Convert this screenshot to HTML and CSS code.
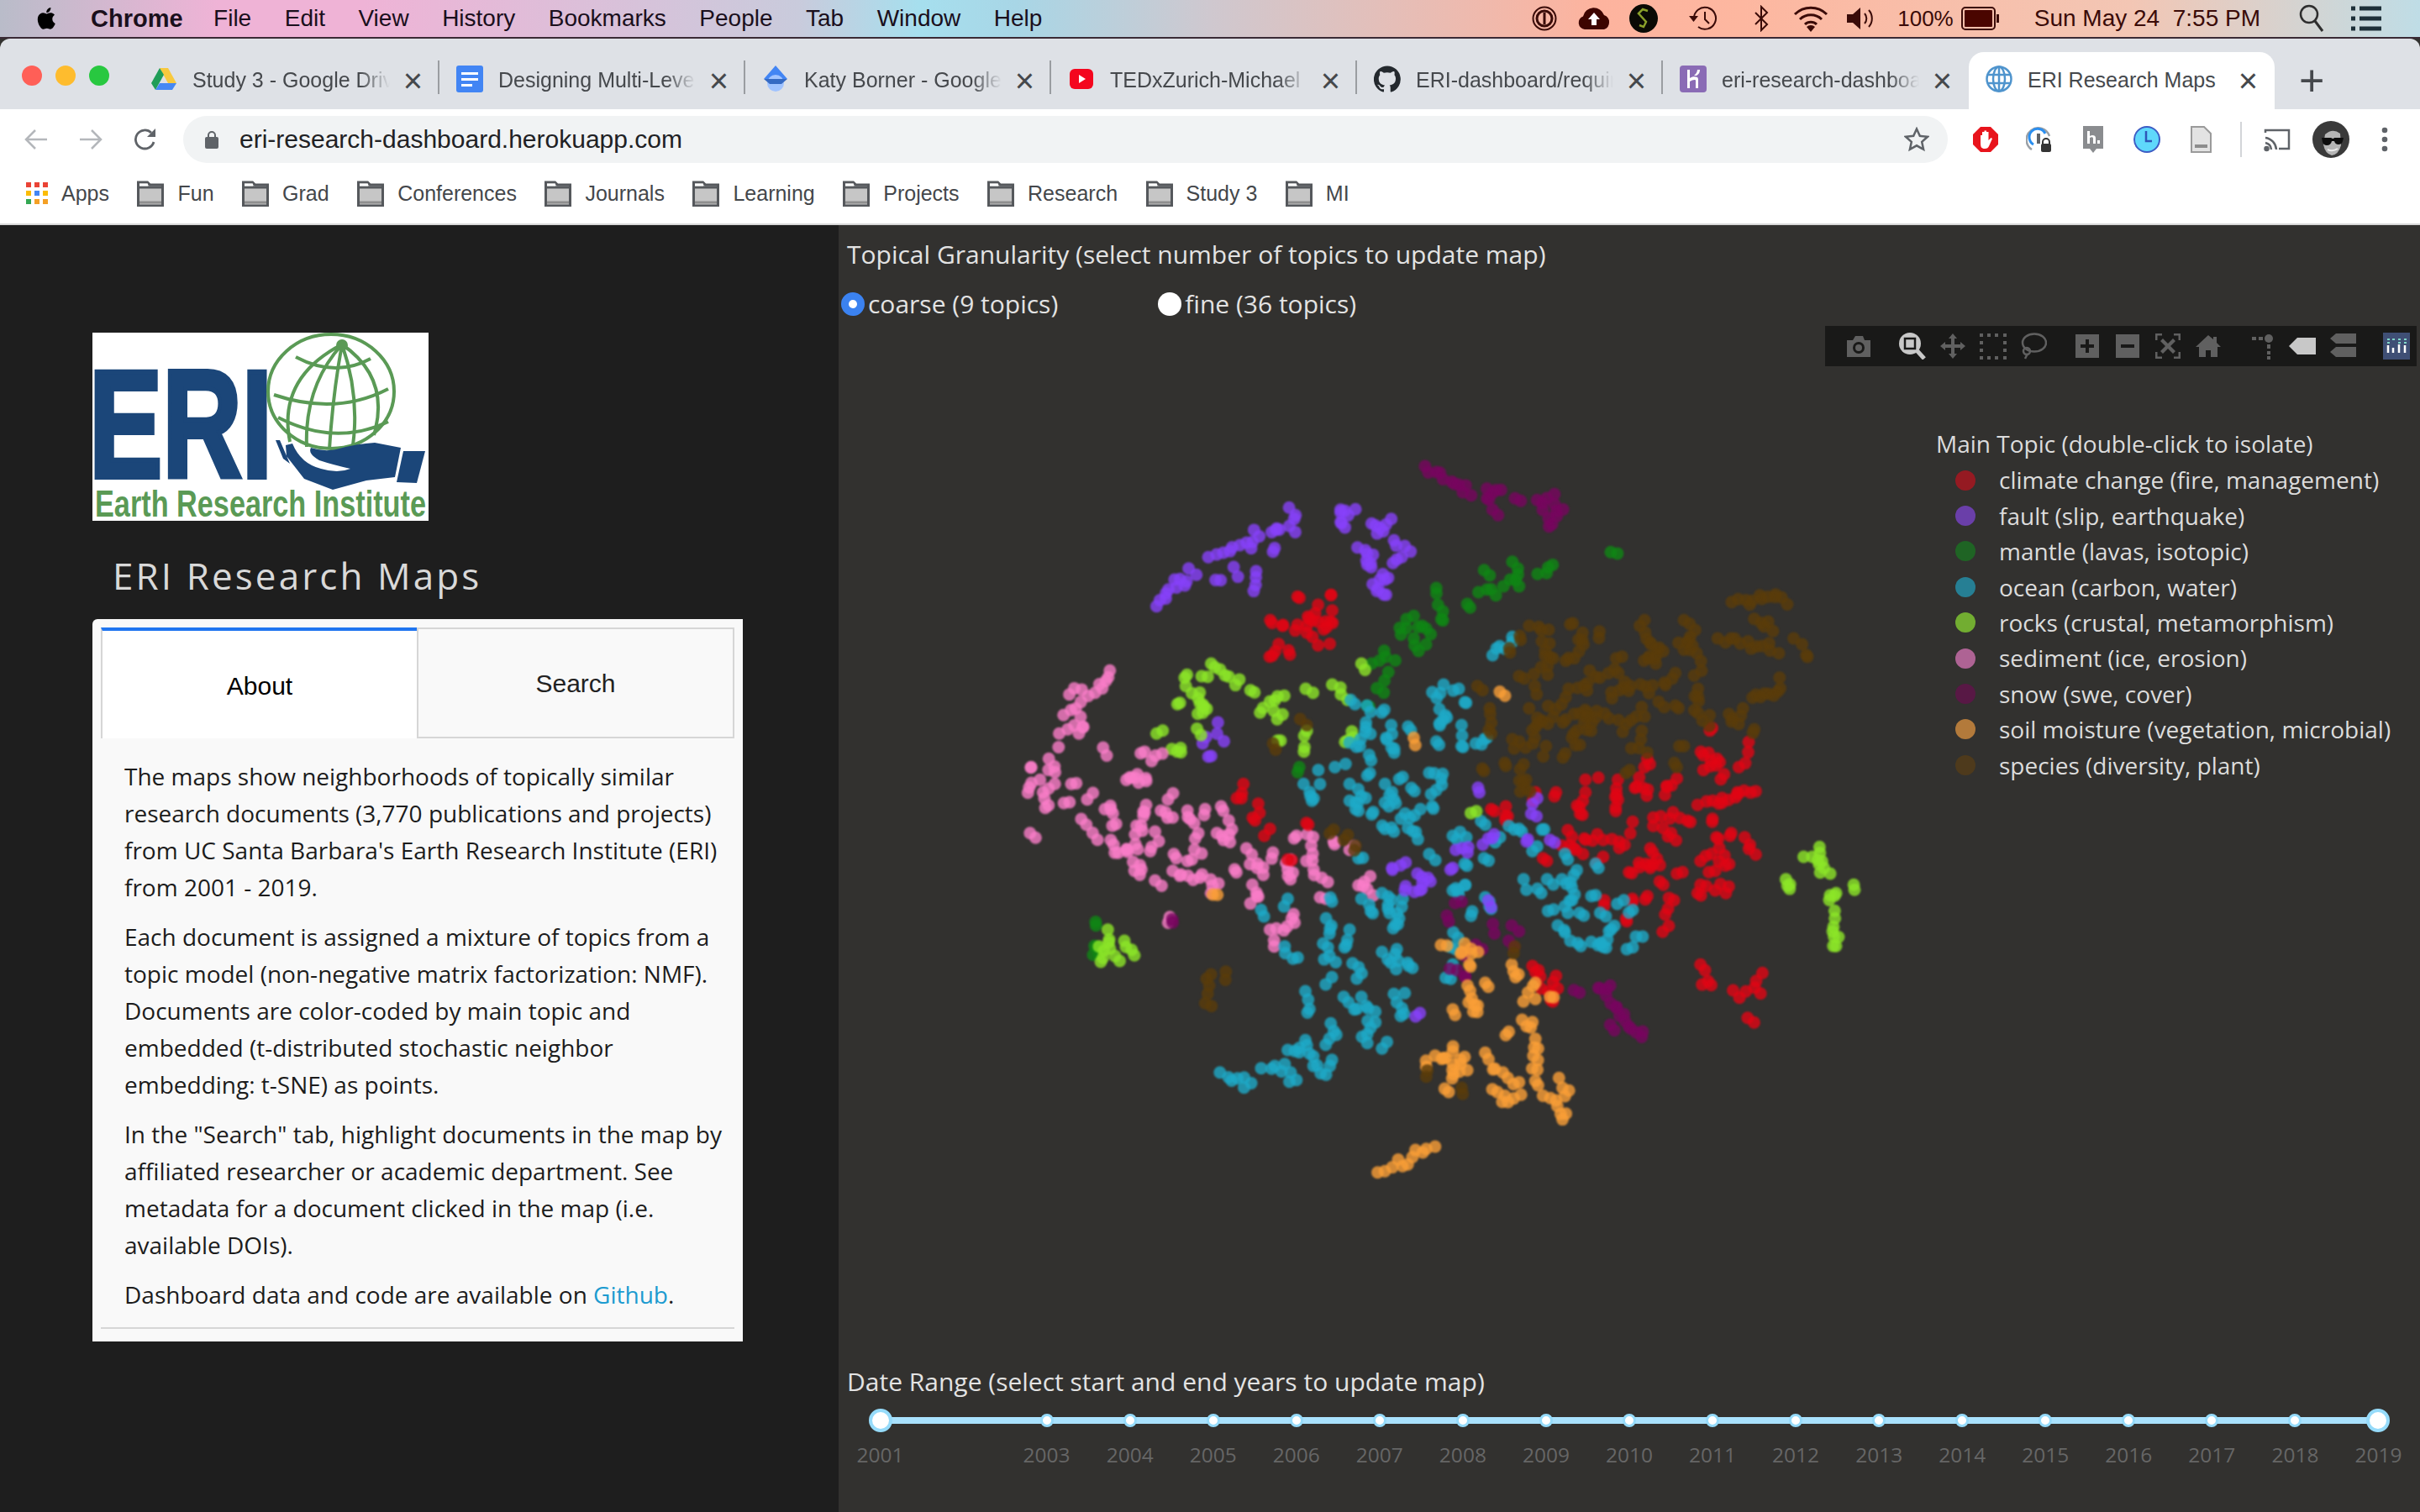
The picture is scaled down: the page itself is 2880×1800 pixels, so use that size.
FILE: index.html
```html
<!DOCTYPE html>
<html>
<head>
    <meta charset="UTF-8">
    <title>ERI Research Maps</title>
    <link rel="stylesheet" href="styles.css">
</head>
<body>
    <svg class="sprites" width="0" height="0">
        <symbol id="folder" viewBox="0 0 32 32">
            <path d="M1.5 3h11l3 3h15v25h-29z" fill="#c6c6c6" stroke="#55585c" stroke-width="3"/>
            <path d="M1.5 9h29" stroke="#55585c" stroke-width="3"/>
            <path d="M3 6h10" stroke="#fff" stroke-width="3"/>
            <path d="M3 27h26" stroke="#8e8e8e" stroke-width="3"/>
        </symbol>
    </svg>

    <!-- mac menu bar -->
    <div class="menubar">
        <svg class="apple" viewBox="0 0 24 24"><path d="M17.05 12.54c-.03-2.6 2.12-3.85 2.22-3.91-1.21-1.77-3.09-2.01-3.76-2.04-1.6-.16-3.12.94-3.93.94-.81 0-2.07-.92-3.4-.89-1.75.03-3.36 1.02-4.26 2.58-1.82 3.15-.46 7.82 1.3 10.38.87 1.25 1.9 2.65 3.25 2.6 1.31-.05 1.8-.84 3.38-.84 1.58 0 2.02.84 3.4.82 1.4-.03 2.29-1.27 3.15-2.53.99-1.45 1.4-2.85 1.42-2.93-.03-.01-2.73-1.05-2.77-4.18zM14.46 4.9c.72-.87 1.2-2.08 1.07-3.28-1.03.04-2.28.69-3.02 1.55-.66.77-1.24 2-1.09 3.18 1.15.09 2.33-.59 3.04-1.45z"/></svg>
        <nav class="menu">
            <b>Chrome</b><span>File</span><span>Edit</span><span>View</span><span>History</span><span>Bookmarks</span><span>People</span><span>Tab</span><span>Window</span><span>Help</span>
        </nav>
        <div class="status">
            <svg class="st st-1p" viewBox="0 0 30 30"><circle cx="15" cy="15" r="13.5" fill="none" stroke="#3a0b08" stroke-width="2"/><circle cx="15" cy="15" r="9" fill="none" stroke="#3a0b08" stroke-width="3"/><rect x="13.5" y="8" width="3" height="14" fill="#3a0b08"/></svg>
            <svg class="st st-cloud" viewBox="0 0 40 30"><path d="M9 28a8 8 0 0 1-2-15.500A13 13 0 0 1 32 11a9 9 0 0 1 0 17z" fill="#3d0500"/><path d="M20 8l7 8h-4v7h-6v-7h-4z" fill="#fff"/></svg>
            <svg class="st st-s" viewBox="0 0 34 34"><circle cx="17" cy="17" r="17" fill="#0a0a05"/><path d="M22 8l-6-2-5 5 9 10-3 6 -5-2" fill="none" stroke="#8aa02a" stroke-width="2.500"/></svg>
            <svg class="st st-time" viewBox="0 0 38 32"><path d="M8 16a13 13 0 1 1 5 10" fill="none" stroke="#3a0b08" stroke-width="2"/><path d="M2 13h11l-5.500 7z" fill="#3a0b08"/><path d="M21 8v9l5 5" fill="none" stroke="#3a0b08" stroke-width="2"/></svg>
            <svg class="st st-bt" viewBox="0 0 20 32"><path d="M3 9l14 14-7 7V2l7 7L3 23" fill="none" stroke="#3a0b08" stroke-width="2"/></svg>
            <svg class="st st-wifi" viewBox="0 0 42 32"><path d="M2 11a27 27 0 0 1 38 0M8 17a19 19 0 0 1 26 0M14 23a10 10 0 0 1 14 0" fill="none" stroke="#3a0b08" stroke-width="3"/><path d="M21 32l-5-6a7 7 0 0 1 10 0z" fill="#3a0b08"/></svg>
            <svg class="st st-vol" viewBox="0 0 34 28"><path d="M0 9h7l9-8v26l-9-8H0z" fill="#3a0b08"/><path d="M21 8a9 9 0 0 1 0 12M26 4a15 15 0 0 1 0 20" fill="none" stroke="#3a0b08" stroke-width="2"/></svg>
            <span class="st-pct">100%</span>
            <svg class="st st-batt" viewBox="0 0 46 28"><rect x="1" y="1" width="39" height="26" rx="4" fill="none" stroke="#3a0b08" stroke-width="2"/><rect x="4" y="4" width="33" height="20" rx="1" fill="#4a0500"/><rect x="42" y="9" width="3" height="10" fill="#3a0b08"/></svg>
            <span class="st-date">Sun May 24&nbsp; 7:55 PM</span>
            <svg class="st st-find" viewBox="0 0 30 34"><circle cx="12" cy="12" r="10" fill="none" stroke="#2e2e2e" stroke-width="2.500"/><path d="M19 20l9 12" stroke="#2e2e2e" stroke-width="3"/></svg>
            <svg class="st st-list" viewBox="0 0 36 30"><path d="M0 3h5M10 3h26M0 15h5M10 15h26M0 27h5M10 27h26" stroke="#1d2f38" stroke-width="5"/></svg>
        </div>
    </div>

    <!-- browser chrome -->
    <div class="tabstrip">
        <div class="lights"><i class="red"></i><i class="yellow"></i><i class="green"></i></div>
        <div class="tab">
            <svg class="fav" viewBox="0 0 32 32"><path d="M11 3h10l10 18H21z" fill="#f8c93e"/><path d="M11 3L1 21l5 8 10-18z" fill="#1f9d58"/><path d="M6 29l5-8h20l-5 8z" fill="#4688f4"/></svg>
            <span class="title">Study 3 - Google Drive</span><span class="x">×</span>
        </div>
        <div class="tab">
            <svg class="fav" viewBox="0 0 32 32"><rect width="32" height="32" rx="3" fill="#4285f4"/><path d="M6 8h20v3H6zM6 15h20v3H6zM6 22h13v3H6z" fill="#fff"/></svg>
            <span class="title">Designing Multi-Level</span><span class="x">×</span>
        </div>
        <div class="tab">
            <svg class="fav" viewBox="0 0 32 32"><path d="M16 0l14 16H2z" fill="#4285f4"/><circle cx="16" cy="21" r="10" fill="#a0c3ff"/><path d="M2 16h28l-7 6H9z" fill="#356ac3"/></svg>
            <span class="title">Katy Borner - Google Scholar</span><span class="x">×</span>
        </div>
        <div class="tab">
            <svg class="fav" viewBox="0 0 32 32"><rect x="2" y="4" width="28" height="24" rx="6" fill="#f4061e"/><path d="M13 11l8 5-8 5z" fill="#fff"/></svg>
            <span class="title">TEDxZurich-Michael Bo</span><span class="x">×</span>
        </div>
        <div class="tab">
            <svg class="fav" viewBox="0 0 24 24"><path fill="#24292e" d="M12 .3a12 12 0 0 0-3.800 23.400c.6.100.8-.3.800-.6v-2c-3.300.7-4-1.600-4-1.600-.6-1.400-1.400-1.800-1.400-1.800-1.100-.7.100-.7.100-.7 1.200.1 1.800 1.200 1.800 1.200 1.100 1.800 2.800 1.300 3.500 1 .1-.8.400-1.300.8-1.600-2.700-.3-5.500-1.300-5.500-5.900 0-1.300.5-2.400 1.200-3.200-.1-.3-.5-1.500.1-3.200 0 0 1-.3 3.300 1.200a11.500 11.500 0 0 1 6 0c2.300-1.500 3.300-1.200 3.300-1.200.6 1.700.2 2.900.1 3.200.8.800 1.200 1.900 1.200 3.200 0 4.600-2.800 5.600-5.500 5.900.4.400.8 1.100.8 2.200v3.300c0 .3.2.7.8.6A12 12 0 0 0 12 .3"/></svg>
            <span class="title">ERI-dashboard/requirem</span><span class="x">×</span>
        </div>
        <div class="tab">
            <svg class="fav" viewBox="0 0 32 32"><rect width="32" height="32" rx="4" fill="#8a6bb5"/><path d="M9 5h3v10c3-2 6-2 9-1 1 1 1 2 1 4v9h-3v-9c0-2-4-1-7 1v8H9zM21 5h3c0 3-1 5-4 7h-3c2-2 4-4 4-7z" fill="#fff"/></svg>
            <span class="title">eri-research-dashboard</span><span class="x">×</span>
        </div>
        <div class="tab active">
            <svg class="fav" viewBox="0 0 32 32" fill="none" stroke="#4f94cd" stroke-width="2.500"><circle cx="16" cy="16" r="14.500"/><ellipse cx="16" cy="16" rx="7" ry="14.500"/><path d="M2 11h28M2 21h28M16 2v28"/></svg>
            <span class="title">ERI Research Maps</span><span class="x">×</span>
        </div>
        <span class="newtab">+</span>
    </div>

    <div class="toolbar">
        <svg class="tb-icon" viewBox="0 0 28 28" fill="none" stroke="#b4b7bb" stroke-width="2.500"><path d="M27 14H3M13 3L2 14l11 11"/></svg>
        <svg class="tb-icon" viewBox="0 0 28 28" fill="none" stroke="#b4b7bb" stroke-width="2.500"><path d="M1 14h24M15 3l11 11-11 11"/></svg>
        <svg class="tb-icon" viewBox="0 0 28 28"><path d="M24 17A11 11 0 1 1 21 6" fill="none" stroke="#5f6368" stroke-width="2.800"/><path d="M16 11h10V1z" fill="#5f6368"/></svg>
        <div class="omnibox">
            <svg class="lock" viewBox="0 0 16 22"><path d="M4 9V6a4 4 0 0 1 8 0v3" fill="none" stroke="#5f6368" stroke-width="2"/><rect y="8" width="16" height="14" rx="2" fill="#5f6368"/></svg>
            <span class="url">eri-research-dashboard.herokuapp.com</span>
            <svg class="star" viewBox="0 0 30 30"><path d="M15 2.500l3.800 8.300 9.200 1-6.800 6.100 1.900 9-8.100-4.600-8.100 4.600 1.900-9L2 11.800l9.200-1z" fill="none" stroke="#5f6368" stroke-width="2.500"/></svg>
        </div>
        <div class="extensions">
            <svg class="ext" viewBox="0 0 32 32"><path d="M10 1h12l9 9v12l-9 9H10l-9-9V10z" fill="#e8141c"/><path d="M10 20v-9h2v6-10h2.500v8-9.500H17V15V7h2.500v10l3-3 1.500 1-4 9c-1 2-2 3-5 3-4 0-5-2-5-7z" fill="#fff"/></svg>
            <svg class="ext" viewBox="0 0 32 32"><path d="M7 28A14 14 0 1 1 28 12" fill="none" stroke="#9aa0a6" stroke-width="2.500"/><path d="M9 22a10 10 0 1 1 14-13" fill="none" stroke="#2b8ff0" stroke-width="3"/><rect x="13" y="9" width="4" height="12" fill="#5f6368"/><path d="M20 22v-3a4 4 0 0 1 8 0v3" fill="none" stroke="#333" stroke-width="2"/><rect x="18" y="21" width="12" height="10" rx="2" fill="#333"/></svg>
            <svg class="ext" viewBox="0 0 32 32"><path d="M4 0h24v27h-8l-4 5-4-5H4z" fill="#8a8c8f"/><path d="M9 6h3v6c3-2 7-1 7 2v7h-3v-6c0-2-2-2-4-1v7H9zM21 17h3v4h-3z" fill="#fff"/></svg>
            <svg class="ext" viewBox="0 0 32 32"><circle cx="16" cy="16" r="15" fill="#5fd8fb" stroke="#3c5cc4" stroke-width="2"/><path d="M15 6v12h7" fill="none" stroke="#2e56b8" stroke-width="2.500"/></svg>
            <svg class="ext" viewBox="0 0 32 32"><path d="M5 1h15l8 8v22H5z" fill="#e3e3e3" stroke="#9a9a9a" stroke-width="2"/><path d="M9 22h15v4H9z" fill="#8d8d8d"/></svg>
            <i class="divider"></i>
            <svg class="ext" viewBox="0 0 32 32" fill="none" stroke="#5f6368" stroke-width="2.500"><path d="M2 8V5h28v22H18"/><path d="M2 14a15 15 0 0 1 13 14M2 20a9 9 0 0 1 7 8"/><circle cx="3.500" cy="27" r="2" fill="#5f6368"/></svg>
            <svg class="avatar" viewBox="0 0 44 44"><circle cx="22" cy="22" r="22" fill="#3a3a3a"/><path d="M15 16q9-8 18-1l1 14q-3 11-11 12-8-2-10-13z" fill="#b5b5b5"/><path d="M11 20h11l2 1h1l1-1h11l-1 4q-1 4-5 4t-5-4h-3q-1 5-6 5-4 0-5-4z" fill="#0d0d0d"/><path d="M18 34q6 3 12-1" stroke="#eee" stroke-width="2" fill="none"/></svg>
            <svg class="ext" viewBox="0 0 32 32" fill="#5f6368"><circle cx="16" cy="5" r="3.300"/><circle cx="16" cy="16" r="3.300"/><circle cx="16" cy="27" r="3.300"/></svg>
        </div>
    </div>

    <div class="bookmarks">
        <span class="bm">
            <svg class="apps" viewBox="0 0 26 26"><path d="M0 0h6v6H0z" fill="#ea4335"/><path d="M10 0h6v6h-6zM20 0h6v6h-6z" fill="#ea4335"/><path d="M0 10h6v6H0zM10 10h6v6h-6z" fill="#fbbc05"/><path d="M10 10h6v6h-6z" fill="#4285f4"/><path d="M20 10h6v6h-6z" fill="#fbbc05"/><path d="M0 20h6v6H0z" fill="#34a853"/><path d="M10 20h6v6h-6zM20 20h6v6h-6z" fill="#f4a025"/></svg>Apps
        </span>
        <span class="bm"><svg class="folder"><use href="#folder"/></svg>Fun</span>
        <span class="bm"><svg class="folder"><use href="#folder"/></svg>Grad</span>
        <span class="bm"><svg class="folder"><use href="#folder"/></svg>Conferences</span>
        <span class="bm"><svg class="folder"><use href="#folder"/></svg>Journals</span>
        <span class="bm"><svg class="folder"><use href="#folder"/></svg>Learning</span>
        <span class="bm"><svg class="folder"><use href="#folder"/></svg>Projects</span>
        <span class="bm"><svg class="folder"><use href="#folder"/></svg>Research</span>
        <span class="bm"><svg class="folder"><use href="#folder"/></svg>Study 3</span>
        <span class="bm"><svg class="folder"><use href="#folder"/></svg>MI</span>
    </div>

    <!-- dashboard -->
    <div class="page">
        <aside class="sidebar">
            <svg class="logo" viewBox="110 396 400 224">
                <rect x="110" y="396" width="400" height="224" fill="#fff"/>
                <text class="logo-eri" x="106" y="568" textLength="218" lengthAdjust="spacingAndGlyphs">ERI</text>
                <g fill="none" stroke="#5a9a55" stroke-width="4">
                    <ellipse cx="394" cy="466" rx="75" ry="68"/>
                    <path d="M407 410Q330 450 345 526M407 410Q362 460 365 532M407 410Q396 470 392 535M407 410Q428 470 420 530M407 410Q465 450 445 518"/>
                    <path d="M352 425Q399 450 441 427M326 470Q400 495 462 463M331 497Q399 532 462 502"/>
                </g>
                <circle cx="407" cy="411" r="7" fill="#5a9a55"/>
                <path d="M328 524L333 524L345 552L337 546ZM340 530L348 528Q358 552 382 558Q402 564 417 558Q395 553 380 548Q366 540 370 533Q385 538 400 535Q425 528 446 527L477 533L470 568L436 572L396 583L362 570L341 543Z" fill="#1b4679"/>
                <path d="M480 537h26l-10 38-24-1z" fill="#1b4679"/>
                <text class="logo-name" x="113" y="615" textLength="394" lengthAdjust="spacingAndGlyphs">Earth Research Institute</text>
            </svg>
            <h1 class="app-title">ERI Research Maps</h1>
            <div class="card">
                <div class="tabs">
                    <div class="tab-btn selected">About</div>
                    <div class="tab-btn">Search</div>
                </div>
                <div class="about">
                    <p>The maps show neighborhoods of topically similar research documents (3,770 publications and projects) from UC Santa Barbara's Earth Research Institute (ERI) from 2001 - 2019.</p>
                    <p>Each document is assigned a mixture of topics from a topic model (non-negative matrix factorization: NMF). Documents are color-coded by main topic and embedded (t-distributed stochastic neighbor embedding: t-SNE) as points.</p>
                    <p>In the "Search" tab, highlight documents in the map by affiliated researcher or academic department. See metadata for a document clicked in the map (i.e. available DOIs).</p>
                    <p>Dashboard data and code are available on <a href="#">Github</a>.</p>
                </div>
                <hr class="rule">
            </div>
        </aside>

        <main class="main">
            <div class="control-label">Topical Granularity (select number of topics to update map)</div>
            <div class="radios">
                <label class="radio on"><i></i>coarse (9 topics)</label>
                <label class="radio"><i></i>fine (36 topics)</label>
            </div>

            <div class="plot">
                <svg id="scatter" class="scatter" viewBox="998 268 1882 1532"></svg>

                <div class="modebar">
                    <div class="mb-group">
                        <svg class="mb" viewBox="0 0 32 32"><path d="M2 9h7l3-5h9l2 5h7v20H2z"/><circle cx="16" cy="18" r="7" fill="#191918"/><circle cx="16" cy="18" r="4"/></svg>
                    </div>
                    <div class="mb-group">
                        <svg class="mb on" viewBox="0 0 32 32"><circle cx="13" cy="13" r="13"/><rect x="7" y="7" width="12" height="12" fill="none" stroke="#191918" stroke-width="2.500"/><path d="M21 21l9 10" stroke="#c8c8c8" stroke-width="5"/></svg>
                        <svg class="mb" viewBox="0 0 32 32"><path d="M16 1l5 6h-3v7h7v-3l6 5-6 5v-3h-7v7h3l-5 6-5-6h3v-7H7v3l-6-5 6-5v3h7V7h-3z"/></svg>
                        <svg class="mb" viewBox="0 0 32 32"><path d="M0 1h4v4H0zM9 1h4v4H9zM18 1h4v4h-4zM28 1h4v4h-4zM0 10h4v4H0zM28 10h4v4h-4zM0 19h4v4H0zM28 19h4v4h-4zM0 28h4v4H0zM9 28h4v4H9zM18 28h4v4h-4zM28 28h4v4h-4z"/></svg>
                        <svg class="mb mb-lasso" viewBox="0 0 32 32"><ellipse cx="17" cy="12" rx="14" ry="10.500"/><circle cx="8" cy="22" r="4"/><path d="M9 25l-3 6"/></svg>
                    </div>
                    <div class="mb-group">
                        <svg class="mb" viewBox="0 0 32 32"><path d="M2 2h28v28H2z"/><path d="M14 8h4v6h6v4h-6v6h-4v-6H8v-4h6z" fill="#191918"/></svg>
                        <svg class="mb" viewBox="0 0 32 32"><path d="M2 2h28v28H2z"/><path d="M8 14h16v4H8z" fill="#191918"/></svg>
                        <svg class="mb" viewBox="0 0 32 32" ><path d="M1 1h8v2.500H3.500V9H1zM23 1h8v8h-2.500V3.500H23zM1 23h2.500v5.500H9V31H1zM28.500 23H31v8h-8v-2.500h5.500z"/><path d="M10 7l6 6 6-6 3 3-6 6 6 6-3 3-6-6-6 6-3-3 6-6-6-6z"/></svg>
                        <svg class="mb" viewBox="0 0 32 32"><path d="M16 3L1 17h4v12h8v-8h6v8h8V17h4l-5-5V5h-4v3z"/></svg>
                    </div>
                    <div class="mb-group">
                        <svg class="mb" viewBox="0 0 32 32"><path d="M4 5h5v4H4zM12 5h5v4h-5z"/><circle cx="24" cy="7" r="5"/><path d="M22 14h4v5h-4zM22 22h4v4h-4zM22 28h4v4h-4z"/></svg>
                        <svg class="mb on" viewBox="0 0 32 32"><path d="M10 6h22v20H10L0 16z"/></svg>
                        <svg class="mb" viewBox="0 0 32 32"><path d="M8 1h24v12H8l-7-6zM8 17h24v12H8l-7-6z"/></svg>
                    </div>
                    <div class="mb-group">
                        <svg class="mb-logo" viewBox="0 0 32 32"><rect width="32" height="32" fill="#3f4f75"/><path d="M6 24v-9M12 24v-6M19 24V14M26 24v-9" stroke="#fff" stroke-width="2.500"/><path d="M5 7h3v2H5zM11 7h3v2h-3zM18 7h3v2h-3zM25 7h3v2h-3zM5 11h3v2H5zM18 11h3v2h-3zM25 11h3v2h-3z" fill="#7fd6c8"/></svg>
                    </div>
                </div>

                <div class="legend">
                    <div class="legend-title">Main Topic (double-click to isolate)</div>
                    <div class="legend-item"><i class="c-red"></i>climate change (fire, management)</div>
                    <div class="legend-item"><i class="c-purple"></i>fault (slip, earthquake)</div>
                    <div class="legend-item"><i class="c-green"></i>mantle (lavas, isotopic)</div>
                    <div class="legend-item"><i class="c-teal"></i>ocean (carbon, water)</div>
                    <div class="legend-item"><i class="c-lime"></i>rocks (crustal, metamorphism)</div>
                    <div class="legend-item"><i class="c-pink"></i>sediment (ice, erosion)</div>
                    <div class="legend-item"><i class="c-snow"></i>snow (swe, cover)</div>
                    <div class="legend-item"><i class="c-orange"></i>soil moisture (vegetation, microbial)</div>
                    <div class="legend-item"><i class="c-brown"></i>species (diversity, plant)</div>
                </div>
            </div>

            <div class="control-label">Date Range (select start and end years to update map)</div>
            <div class="slider">
                <div class="mark end"><i></i>2001</div>
                <div class="mark blank"></div>
                <div class="mark"><i></i>2003</div>
                <div class="mark"><i></i>2004</div>
                <div class="mark"><i></i>2005</div>
                <div class="mark"><i></i>2006</div>
                <div class="mark"><i></i>2007</div>
                <div class="mark"><i></i>2008</div>
                <div class="mark"><i></i>2009</div>
                <div class="mark"><i></i>2010</div>
                <div class="mark"><i></i>2011</div>
                <div class="mark"><i></i>2012</div>
                <div class="mark"><i></i>2013</div>
                <div class="mark"><i></i>2014</div>
                <div class="mark"><i></i>2015</div>
                <div class="mark"><i></i>2016</div>
                <div class="mark"><i></i>2017</div>
                <div class="mark"><i></i>2018</div>
                <div class="mark end"><i></i>2019</div>
            </div>
        </main>
    </div>

    <script src="map.js"></script>
</body>
</html>
```

FILE: styles.css
```css
* {
    box-sizing: border-box;
}

html, body {
    margin: 0;
    width: 2880px;
    height: 1800px;
    overflow: hidden;
}

body {
    display: flex;
    flex-direction: column;
    font-family: 'Open Sans', 'Liberation Sans', sans-serif;
    background: #32312f;
}

.sprites {
    position: absolute;
}

/* mac menu bar */
.menubar {
    height: 46px;
    flex: none;
    display: flex;
    align-items: center;
    padding: 0 0 0 41px;
    font-family: 'Liberation Sans', sans-serif;
    font-size: 28px;
    color: #1a0f1c;
    border-bottom: 2px solid #3a2a35;
    background: linear-gradient(90deg, #b9bcc9 0%, #efb3d6 9%, #efb3d6 15%, #c9cbdc 33%, #a6dfee 38%, #a8d6e6 42%, #cfc8cf 50%, #fdb39e 66%, #fdb7a0 72%, #f3c6b4 88%, #bfdde6 100%);
}

.apple {
    width: 30px;
    height: 34px;
    flex: none;
}

.menu {
    display: flex;
    gap: 39.500px;
    margin-left: 37px;
}

.menu b {
    font-size: 29px;
    margin-right: -3px;
}

.status {
    display: flex;
    align-items: center;
    position: absolute;
    right: 46px;
    top: 0;
    height: 44px;
    color: #3a0b08;
}

.st { flex: none; }
.st-1p { width: 30px; height: 30px; }
.st-cloud { width: 40px; height: 30px; margin-left: 24px; }
.st-s { width: 34px; height: 34px; margin-left: 22px; }
.st-time { width: 38px; height: 32px; margin-left: 35px; }
.st-bt { width: 20px; height: 32px; margin-left: 40px; }
.st-wifi { width: 42px; height: 32px; margin-left: 28px; }
.st-vol { width: 34px; height: 28px; margin-left: 22px; }
.st-pct { margin-left: 26px; font-size: 26px; }
.st-batt { width: 46px; height: 28px; margin-left: 9px; }
.st-date { margin-left: 41px; }
.st-find { width: 30px; height: 34px; margin-left: 46px; }
.st-list { width: 36px; height: 30px; margin-left: 32px; }

/* tabs */
.tabstrip {
    height: 84px;
    flex: none;
    display: flex;
    align-items: flex-end;
    padding-left: 159px;
    position: relative;
    background: #dee1e6;
    border-radius: 12px 12px 0 0;
    font-family: 'Liberation Sans', sans-serif;
    font-size: 25px;
    color: #45484c;
}

.lights {
    position: absolute;
    left: 26px;
    top: 32px;
    display: flex;
    gap: 16px;
}

.lights i {
    width: 24px;
    height: 24px;
    border-radius: 50%;
}

.lights .red { background: #ff5f57; }
.lights .yellow { background: #febc2e; }
.lights .green { background: #28c840; }

.tab {
    width: 364px;
    height: 68px;
    flex: none;
    display: flex;
    align-items: center;
    padding: 0 20px 0 20px;
    position: relative;
}

.tab::after {
    content: "";
    position: absolute;
    right: 0;
    top: 10px;
    height: 40px;
    width: 2px;
    background: #9a9da1;
}

.tab:nth-child(7)::after,
.tab.active::after {
    display: none;
}

.tab.active {
    background: #fff;
    border-radius: 18px 18px 0 0;
}

.fav {
    width: 32px;
    height: 32px;
    flex: none;
    margin-top: -4px;
}

.title {
    width: 242px;
    margin: -1px 0 0 18px;
    white-space: nowrap;
    overflow: hidden;
    -webkit-mask-image: linear-gradient(90deg, #000 85%, transparent 100%);
    mask-image: linear-gradient(90deg, #000 85%, transparent 100%);
}

.tab.active .title {
    -webkit-mask-image: none;
    mask-image: none;
}

.x {
    margin: -1px 0 0 16px;
    font-size: 40px;
    line-height: 1;
    color: #45484c;
}

.newtab {
    margin: 0 0 8px 29px;
    font-size: 52px;
    line-height: 1;
    color: #45484c;
}

/* toolbar */
.toolbar {
    height: 72px;
    flex: none;
    display: flex;
    align-items: center;
    padding: 0 0 0 29px;
    background: #fff;
    font-family: 'Liberation Sans', sans-serif;
}

.tb-icon {
    width: 28px;
    height: 28px;
    flex: none;
    margin-right: 37px;
}

.omnibox {
    width: 2100px;
    height: 56px;
    margin-left: -6px;
    flex: none;
    display: flex;
    align-items: center;
    padding: 0 22px 0 26px;
    background: #f1f3f4;
    border-radius: 28px;
}

.lock {
    width: 16px;
    height: 22px;
    flex: none;
}

.url {
    margin-left: 25px;
    font-size: 30px;
    color: #202124;
}

.star {
    width: 30px;
    height: 30px;
    margin-left: auto;
}

.extensions {
    flex: 1;
    display: flex;
    align-items: center;
    gap: 32px;
    padding-left: 29px;
}

.ext {
    width: 32px;
    height: 32px;
    flex: none;
}

.divider {
    width: 2px;
    height: 42px;
    margin: 0 -6px 0 -1px;
    background: #d3d5d8;
}

.avatar {
    width: 44px;
    height: 44px;
    flex: none;
    margin: 0 -6px;
}

/* bookmarks bar */
.bookmarks {
    height: 66px;
    flex: none;
    display: flex;
    align-items: center;
    gap: 33.500px;
    padding: 0 0 8px 31px;
    background: #fff;
    border-bottom: 2px solid #d8d8d8;
    font-family: 'Liberation Sans', sans-serif;
    font-size: 25px;
    color: #44474b;
}

.bm {
    display: flex;
    align-items: center;
    gap: 16px;
}

.apps {
    width: 26px;
    height: 26px;
}

.folder {
    width: 32px;
    height: 32px;
}

/* dashboard */
.page {
    flex: 1;
    min-height: 0;
    display: flex;
}

.sidebar {
    width: 998px;
    flex: none;
    padding: 128px 0 0 110px;
    background: #1e1e1e;
}

.logo {
    display: block;
    width: 400px;
    height: 224px;
}

.logo-eri {
    font-family: 'Liberation Sans', sans-serif;
    font-weight: bold;
    font-size: 182px;
    fill: #1b4679;
    stroke: #1b4679;
    stroke-width: 6px;
}

.logo-name {
    font-family: 'Liberation Sans', sans-serif;
    font-weight: bold;
    font-size: 44px;
    fill: #5a9a55;
}

.app-title {
    margin: 35px 0 0 24px;
    font-size: 44px;
    line-height: 60px;
    font-weight: 400;
    letter-spacing: 3.100px;
    color: #d9d9d9;
}

.card {
    width: 774px;
    height: 860px;
    margin-top: 22px;
    padding: 10px 10px 0;
    background: #f9f9f9;
    border-radius: 6px 0 0 0;
}

.tabs {
    display: flex;
    height: 132px;
    font-family: 'Liberation Sans', sans-serif;
    font-size: 30px;
    color: #222;
}

.tab-btn {
    flex: 1;
    display: flex;
    align-items: center;
    justify-content: center;
    border: 2px solid #d6d6d6;
    padding-top: 2px;
}

.tab-btn.selected {
    background: #fff;
    color: #000;
    border: 0;
    border-left: 2px solid #d6d6d6;
    border-top: 4px solid #1f75f0;
    padding: 4px 0 0;
}

.about {
    padding: 23px 8px 0 28px;
    font-size: 28px;
    line-height: 44px;
    color: #1c1c1c;
}

.about p {
    margin: 0 0 15px;
}

.about a {
    color: #1c9bd0;
    text-decoration: none;
}

.rule {
    margin: 17px 0 0;
    border: 0;
    border-top: 2px solid #d6d6d6;
}

.main {
    flex: 1;
    min-width: 0;
    display: flex;
    flex-direction: column;
    color: #e3e3e3;
    font-size: 30px;
}

.control-label {
    flex: none;
    padding-left: 10px;
    line-height: 44px;
}

.main > .control-label:first-child {
    margin-top: 13px;
}

.radios {
    display: flex;
    gap: 119px;
    margin-top: 15px;
    padding-left: 3px;
    line-height: 44px;
}

.radio {
    display: flex;
    align-items: center;
    gap: 4px;
}

.radio i {
    width: 28px;
    height: 28px;
    border-radius: 50%;
    background: #fff;
}

.radio.on i {
    background: #3b82f0;
    border: 9px solid #3b82f0;
    position: relative;
}

.radio.on i::after {
    content: "";
    display: block;
    width: 10px;
    height: 10px;
    border-radius: 50%;
    background: #fff;
}

.plot {
    flex: 1;
    min-height: 0;
}

.scatter {
    position: absolute;
    left: 998px;
    top: 268px;
    width: 1882px;
    height: 1532px;
    filter: blur(0.8px);
}

.modebar {
    position: absolute;
    left: 2172px;
    top: 388px;
    width: 704px;
    height: 48px;
    padding-left: 16px;
    display: flex;
    gap: 16px;
    background: #191918;
}

.mb-group {
    display: flex;
}

.mb, .mb-logo {
    width: 48px;
    height: 48px;
    padding: 8px;
    fill: #606060;
}

.mb.on {
    fill: #c8c8c8;
}

.mb-lasso {
    fill: none;
    stroke: #606060;
    stroke-width: 2.500px;
}

.legend {
    position: absolute;
    left: 2304px;
    top: 507px;
    font-size: 28px;
    line-height: 42.400px;
    color: #dcdcdc;
}

.legend-title {
    margin-bottom: 1px;
}

.legend-item {
    display: flex;
    align-items: center;
    padding-left: 23px;
    white-space: nowrap;
}

.legend-item i {
    width: 24px;
    height: 24px;
    margin-right: 28px;
    border-radius: 50%;
}

.c-red { background: #951a22; }
.c-purple { background: #6a3fa9; }
.c-green { background: #1f6424; }
.c-teal { background: #267f94; }
.c-lime { background: #72ad31; }
.c-pink { background: #ae6394; }
.c-snow { background: #581845; }
.c-orange { background: #b37a3b; }
.c-brown { background: #4e3a1c; }

.slider {
    display: grid;
    grid-template-columns: repeat(19, 1fr);
    position: relative;
    height: 127px;
    margin-top: 6px;
    font-size: 24.500px;
    color: #666;
    text-align: center;
}

.slider::before {
    content: "";
    position: absolute;
    left: 50px;
    right: 50px;
    top: 14px;
    height: 8px;
    background: #a9e1fd;
}

.mark {
    position: relative;
    line-height: 36px;
}

.mark i {
    display: block;
    width: 16px;
    height: 16px;
    margin: 10px auto 15px;
    border-radius: 50%;
    background: #fff;
    border: 3px solid #96dbfa;
}

.mark.end i {
    width: 28px;
    height: 28px;
    margin: 4px auto 9px;
    border-width: 4px;
}
```

FILE: map.js
```js
// scatter of documents, traced by hand as short runs of dots
const COLORS = {
    red: '#e10514',
    purple: '#8741fa',
    green: '#0f8714',
    teal: '#1eaac8',
    lime: '#8ce628',
    pink: '#fa7dc8',
    snow: '#78055f',
    orange: '#fa9f37',
    brown: '#5a3c0a'
};

// runs from the top of the map: x0 y0 x1 y1 ... (each run is one line)
const TOP = {
    snow: `815 105 860 160 895 210|925 185|950 190|975 220|925 220|935 260|1045 205 1020 240 1030 290 1040 325|1045 240 1050 290`,
    purple: `338 605 360 550 390 530|370 510|395 470 405 490|430 430 470 400 500 380 550 335 590 285|545 410|475 465 480 500|515 480 510 535|452 512|665 260 690 250|665 270 672 320|720 310 740 320 730 355|755 293|760 370 775 400 762 440|695 395 715 420 710 460 735 480 745 510 722 525 742 570|447 1020 445 1060 455 1090|420 1095|435 1140`,
    green: `1145 412 1160 412|895 610|910 555 950 530 985 500|930 495|980 470|1015 490 1045 465|835 540 838 560|838 600 845 650|795 640 770 690|810 675|825 705|795 720 803 765|720 810 765 790|750 840 730 890|712 960`,
    red: `592 575|648 565|650 620 650 660 610 650 590 680|625 600 610 650|640 680|605 700|540 655|562 675|555 740 535 790|575 778|625 745 645 745|1390 1090 1385 1120|1325 1040|1305 1125 1335 1160|1210 1150`,
    lime: `435 810 475 885|392 850|418 855|390 890 410 930 430 970 408 995|375 955|505 905|565 925 535 945 550 1000|522 985|603 900 620 905|650 885 670 925|338 1060|417 1065|365 1115 385 1130|605 1050 605 1105|553 1085|673 1090|685 1052|702 810`,
    pink: `255 835 240 900 205 950 190 985|183 920|203 1000 205 1040|165 1060 165 1100|200 1060|180 1045|243 1110 248 1140|310 1130 345 1135`,
    teal: `935 780 950 740|970 715|683 940|712 960|738 985|710 1020 705 1060 690 1100 715 1130|755 1030 750 1080 760 1130|785 1035|840 1100|880 1105|905 1095|925 1075|848 885 835 940 850 1000 845 1040|875 900|888 950|880 1030 885 1060`,
    orange: `795 1075 800 1105|957 925`,
    brown: `1360 590 1420 570 1455 590|1400 650 1430 690|1335 720 1400 745 1440 770|1470 720 1490 770|1205 655 1200 680 1220 740 1240 770 1200 790|1295 690 1270 740 1300 780 1305 830|1275 655|1000 675 1025 700 1025 760 1040 800 1020 830 995 855|1073 670|1125 695|1095 700 1095 750 1065 810|965 755|985 725|1165 785|1225 810|1010 890 1010 930|1070 900 1130 860 1160 840 1175 900 1145 915|1180 890 1250 870 1260 845|1065 930 1045 970 1040 1000 1005 1040|1000 970 1020 1020|1080 990 1135 990 1075 1060|1110 1050|1060 1020|1190 1000 1165 1050|1200 965 1210 990|1240 965|1260 960|1300 900 1295 980 1320 1030|1445 860 1450 890 1430 920 1395 925|1380 970 1365 1020|1355 990|1400 1045|1200 1050 1200 1110 1210 1130|1275 1105|1090 1100|930 970 935 1000 925 1040|970 1080 970 1115|1010 1075 995 1120|1030 1105 1030 1140|1060 1145|605 1030|545 1095|908 890`
};

// runs from the bottom of the map
const BOTTOM = {
    pink: `140 10 150 55|110 40|290 65 270 85 310 95|125 85 105 110|150 100|178 100|130 130 138 185|175 165|205 155|235 190|245 190 250 240|195 225 215 265|342 155|305 175 295 270 270 350 290 400|330 195|350 220|375 195 385 245|405 190|432 180|108 275|245 300 250 340|320 270 325 300|312 340|445 230 450 310|425 275|388 295|352 350|375 375 400 355|350 410 400 440 430 465|320 445 328 465|297 405|455 405|475 330 490 380 505 420|485 460 490 500 480 520|560 285|578 280|585 320 585 365|520 345|550 370|545 405 550 450|590 425|613 450|623 305|650 335|610 510|685 430|665 462|680 475|555 565 535 630|515 620|522 680|345 575 345 595`,
    red: `470 100 460 150|495 170 490 230|515 260 510 285|580 245|545 370|1050 85 1068 85|1105 85 1105 185|1150 40 1140 100 1155 130|1205 80 1180 140|1250 50 1275 35|1310 40|1285 65|965 130 960 150|915 180 915 235|890 190|1000 130|1050 130 1040 170|1045 210|1020 265|1048 295|1240 175 1290 150 1335 125|1010 320 1045 350|1080 300 1115 310|1070 280|1130 235 1130 270|1165 220 1220 225|1165 250 1190 280 1205 295|1265 235|1272 290|1295 285|1320 290 1330 325|1160 330 1175 370 1130 420|1160 400|1080 360|978 365|1205 420|1245 375 1280 330 1290 385|1270 410|1182 460|1245 460|1270 480|1240 490|1288 490|1155 500|1082 515|1200 515|1190 545 1190 600|1120 590|1130 520|960 750 975 790|1000 785|975 830 990 870|1003 830|1245 745 1260 820|1350 775 1315 865|1325 935`,
    teal: `572 100 592 160|597 50 595 90|625 40 640 35|650 100 680 160|660 165|680 70|710 100 730 150 720 190|690 200|660 190|760 125|740 75|785 60 810 80 800 130|770 190 740 230 770 290|710 260|725 270|790 180|825 285|848 290|880 245|920 250|905 290|785 350|878 365|845 385|665 365|960 340|942 270|980 262|1020 370|1072 400|1030 425|945 440 950 470|975 490|985 440|1010 440 1030 470 1030 520|1060 500|1115 515|996 548|1020 560|1040 560|1130 550|1075 560 1095 600 1085 650|1003 605|1015 630 1040 670 1070 665|1085 685|1120 690|1147 645|825 480 848 470|835 495|858 555|880 505|890 545|670 510 690 560|705 490 720 520|740 510 735 570 720 615|715 545|620 520|500 550|545 510 540 540|610 580 620 620|650 620 640 680|605 670 625 730|655 740 670 780|705 700 720 735 760 750|730 690|562 720|540 680 545 710|620 790 610 810|575 840 578 900|640 860|670 860 685 910 680 990|725 850 740 850|730 880 740 920|658 905|618 955 620 1010 610 1040|575 1015|680 1025|705 1045|545 1050 580 1060 590 1100|540 1100 555 1150|620 1085 615 1130|430 1130 480 1160|500 1115 530 1120|826 630|830 690|825 745 820 790`,
    purple: `870 130|830 335|850 345|722 400|745 380|825 400|765 420 775 460|783 435|745 465|760 485|895 280|885 295|950 305|990 300|960 172|967 215|890 540|762 930`,
    snow: `840 520|815 570|893 600 893 630|925 605 940 625|920 660|820 760 845 790|845 700|875 690|1040 845|1075 830|1092 820|1085 855 1105 900 1120 960 1145 1010|1092 960|350 595`,
    orange: `418 495|805 675|845 670|840 700|868 700|853 745|880 810|925 745 935 790|965 810 945 870|990 860|850 820 855 860 870 920|825 905|950 965|960 950|920 985|965 1010 965 1120|825 1055|795 1070 840 1100 815 1180|780 1110|845 1075|880 1060 895 1110|910 1130 940 1200 905 1240|892 1190|965 1160 975 1210|1005 1150 1010 1180|1015 1215|1000 1230 1015 1305|795 1395 760 1440 710 1490`,
    green: `220 605|222 680|215 710|562 58`,
    lime: `240 620 245 680|268 660|225 680|228 735|260 732|285 712|865 197|1447 325|1420 360 1450 390 1445 425|1465 420|1390 440 1400 480|1505 460|1475 490 1460 520 1470 550|1473 580 1475 680`,
    brown: `440 770 438 800|415 780|412 820 405 875|623 263|640 300|660 320|840 1185|780 1145|930 680 925 695|875 45|915 35|945 30 935 80 960 130|1125 50|1205 40`
};

// small seeded random so the picture is the same each time
let seed = 7;
function rnd() {
    seed = (seed * 16807) % 2147483647;
    return seed / 2147483647 - 0.5;
}

const svg = document.getElementById('scatter');
const SVG_NS = 'http://www.w3.org/2000/svg';

function dot(x, y, color) {
    const c = document.createElementNS(SVG_NS, 'circle');
    c.setAttribute('cx', x.toFixed(1));
    c.setAttribute('cy', y.toFixed(1));
    c.setAttribute('r', 7.5);
    c.setAttribute('fill', color);
    c.setAttribute('fill-opacity', 0.8);
    svg.appendChild(c);
}

function drawRuns(runs, toX, toY) {
    for (const name in runs) {
        for (const run of runs[name].split('|')) {
            const n = run.split(' ').map(Number);
            const pts = [];
            for (let i = 0; i < n.length; i += 2) pts.push([toX(n[i]), toY(n[i + 1])]);
            dot(pts[0][0], pts[0][1], COLORS[name]);
            if (pts.length === 1) dot(pts[0][0] + rnd() * 16, pts[0][1] + rnd() * 16, COLORS[name]);
            for (let i = 1; i < pts.length; i++) {
                const dx = pts[i][0] - pts[i - 1][0];
                const dy = pts[i][1] - pts[i - 1][1];
                const steps = Math.max(1, Math.round(Math.hypot(dx, dy) / 9));
                for (let s = 1; s <= steps; s++) {
                    const x = pts[i - 1][0] + dx * s / steps + rnd() * 7;
                    const y = pts[i - 1][1] + dy * s / steps + rnd() * 7;
                    dot(x, y, COLORS[name]);
                    // neighbours clump up in the real map
                    if (s % 2 === 0) dot(x + rnd() * 18, y + rnd() * 18, COLORS[name]);
                }
            }
        }
    }
}

drawRuns(TOP, x => 1150 + x / 1.493, y => 520 + y / 3);
drawRuns(BOTTOM, x => 1150 + x / 1.425, y => 900 + y / 3);
```
